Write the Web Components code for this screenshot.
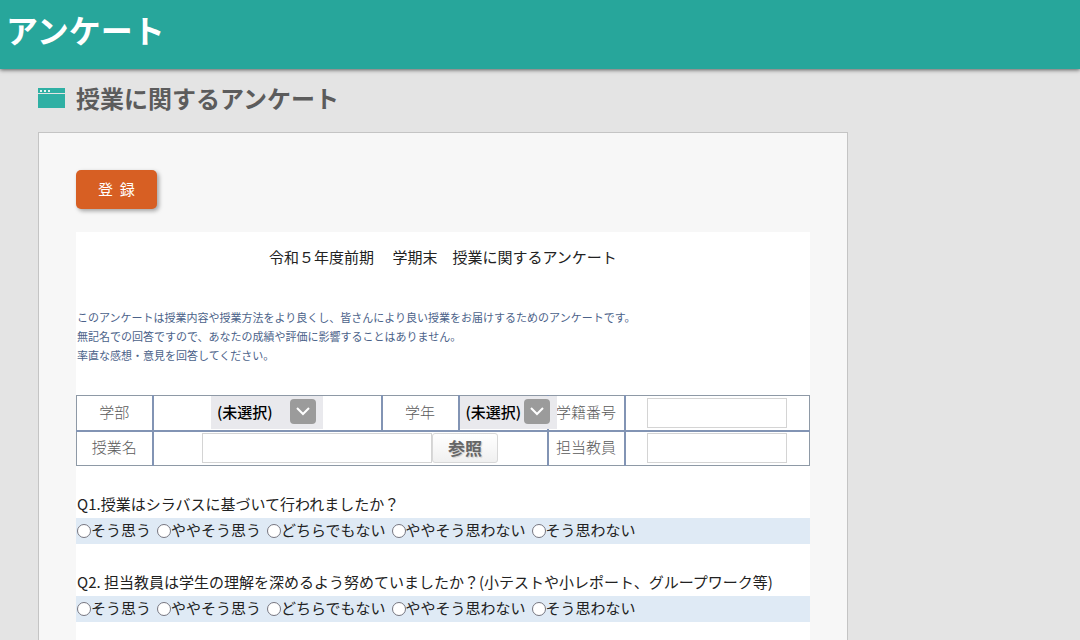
<!DOCTYPE html>
<html lang="ja">
<head>
<meta charset="utf-8">
<title>アンケート</title>
<style>
  html { height: 100%; }
  body {
    margin: 0; min-height: 100%; display: flex; flex-direction: column;
    background: #e4e4e4; color: #222;
    font: 15px/24px "Noto Sans CJK JP", sans-serif;
  }
  survey-page { flex: 1; }
</style>
</head>
<body>
<site-header>アンケート</site-header>
<survey-page>
  <page-title slot="title">授業に関するアンケート</page-title>
  <submit-button slot="actions">登  録</submit-button>
  <survey-intro>
    <span slot="heading">令和５年度前期　 学期末　授業に関するアンケート</span>
    このアンケートは授業内容や授業方法をより良くし、皆さんにより良い授業をお届けするためのアンケートです。<br>
    無記名での回答ですので、あなたの成績や評価に影響することはありません。<br>
    率直な感想・意見を回答してください。
  </survey-intro>
  <student-table></student-table>
  <survey-question name="q1">Q1.授業はシラバスに基づいて行われましたか？</survey-question>
  <survey-question name="q2">Q2. 担当教員は学生の理解を深めるよう努めていましたか？(小テストや小レポート、グループワーク等)</survey-question>
</survey-page>

<script>
  const define = (name, html, setup) => {
    const template = document.createElement('template');
    template.innerHTML = html;
    customElements.define(name, class extends HTMLElement {
      constructor() {
        super();
        this.attachShadow({ mode: 'open' }).append(template.content.cloneNode(true));
      }
      connectedCallback() { if (setup) setup(this, this.shadowRoot); }
    });
  };

  define('site-header', `
    <style>
      :host { display: block; position: relative; background: #27a69b; box-shadow: 0 1px 4px rgba(0,0,0,.6); }
      h1 { margin: 0; padding: 5px 6px 16px; font-size: 32px; line-height: 48px; font-weight: 700; color: #fff; }
    </style>
    <header><h1><slot></slot></h1></header>`);

  define('page-title', `
    <style>
      :host { display: flex; align-items: center; gap: 10px; color: #5c5c5c; }
      svg { flex: none; }
      h2 { margin: 0; font-size: 24px; line-height: 36px; font-weight: 700; }
    </style>
    <svg width="28" height="20" viewBox="0 0 28 20" aria-hidden="true">
      <path fill="#2fb0a4" d="M0 0h27v5H0zM0 6h27v14H0z"/>
      <path fill="#e4f4f2" d="M2 2h2v2H2zM6 2h2v2H6zM10 2h2v2h-2z"/>
    </svg>
    <h2><slot></slot></h2>`);

  define('submit-button', `
    <style>
      :host { display: block; }
      button {
        display: block; height: 39px; padding: 0 22px 2px; border: 0; border-radius: 5px;
        background: #d75f23; color: #fff; font: inherit; white-space: pre;
        box-shadow: 2px 2px 4px rgba(0,0,0,.35);
      }
    </style>
    <button type="button"><slot></slot></button>`);

  define('survey-page', `
    <style>
      :host { display: flex; flex-direction: column; padding: 11px 38px 0; }
      .card {
        flex: 1; display: flex; flex-direction: column; box-sizing: border-box;
        width: 75vw; margin-top: 16px; padding: 37px 37px 0;
        background: #f7f7f7; border: 1px solid #c4c4c4; border-bottom: 0;
      }
      .sheet { flex: 1; margin-top: 23px; background: #fff; }
    </style>
    <slot name="title"></slot>
    <main class="card">
      <slot name="actions"></slot>
      <div class="sheet"><slot></slot></div>
    </main>`);

  define('survey-intro', `
    <style>
      :host { display: block; padding-top: 13px; }
      h3 { margin: 0; font: inherit; text-align: center; white-space: pre-wrap; }
      p { margin: 39px 0 30px; padding-left: 1px; font-size: 11px; line-height: 19px; color: #4b6289; }
    </style>
    <h3><slot name="heading"></slot></h3>
    <p><slot></slot></p>`);

  define('student-table', `
    <style>
      :host { display: block; }
      table { width: 100%; table-layout: fixed; border-collapse: collapse; border: 1px solid #8e99a6; color: #5a5a5a; }
      th, td { height: 33px; padding: 0; border: 2px solid #8294b4; text-align: center; font-weight: 300; line-height: 24px; }
      th { box-sizing: border-box; padding-bottom: 2px; height: 35px; }
      tr:first-child > * { border-top: 1px solid #8e99a6; }
      tr:last-child > * { border-bottom: 1px solid #8e99a6; }
      tr > :first-child { border-left: 1px solid #8e99a6; }
      tr > :last-child { border-right: 1px solid #8e99a6; }
      .first { width: 76px; } .label { width: 77px; } .wide { width: 229px; } .narrow { width: 89px; }
      select {
        appearance: none; position: relative; display: block; box-sizing: border-box;
        height: 33px; margin: 0 auto; padding: 0 0 2px 6px; border: 0; border-radius: 0;
        color: #000; font: inherit; font-weight: 500;
        background: #e9e9ed url("data:image/svg+xml,%3Csvg xmlns='http://www.w3.org/2000/svg' width='26' height='25'%3E%3Crect width='26' height='25' rx='4' fill='%239b9b9b'/%3E%3Cpath d='M7 9l6 6 6-6' fill='none' stroke='%23fff' stroke-width='2'/%3E%3C/svg%3E") no-repeat right 7px top 3px;
      }
      #dept { width: 112px; } #grade { width: 97px; margin: 0; }
      input { box-sizing: border-box; height: 30px; padding: 0 4px; border: 1px solid #d4d4d4; background: #fff; font: inherit; }
      .short { display: block; width: 140px; margin: 0 auto; }
      .course { display: flex; justify-content: center; }
      .course input { width: 230px; }
      button {
        height: 30px; padding: 0 15px; border: 1px solid #d8d8d8; border-radius: 3px;
        background: linear-gradient(#fff, #f0f0f0); color: #666; font: inherit; font-size: 17px; font-weight: 700;
        text-shadow: 1px 1px 1px #ccc;
      }
    </style>
    <table>
      <colgroup><col class="first"><col class="wide"><col class="label"><col class="narrow"><col class="label"><col></colgroup>
      <tr>
        <th><label for="dept">学部</label></th>
        <td><select id="dept"><option>(未選択)</option></select></td>
        <th><label for="grade">学年</label></th>
        <td><select id="grade"><option>(未選択)</option></select></td>
        <th><label for="number">学籍番号</label></th>
        <td><input class="short" id="number" type="text"></td>
      </tr>
      <tr>
        <th><label for="course">授業名</label></th>
        <td colspan="3"><div class="course"><input id="course" type="text"><button type="button">参照</button></div></td>
        <th><label for="teacher">担当教員</label></th>
        <td><input class="short" id="teacher" type="text"></td>
      </tr>
    </table>`);

  const answers = ['そう思う', 'ややそう思う', 'どちらでもない', 'ややそう思わない', 'そう思わない'];
  define('survey-question', `
    <style>
      :host { display: block; margin-top: 26px; }
      fieldset { margin: 0; padding: 0; border: 0; min-width: 0; }
      legend { padding: 0 0 2px 1px; }
      .answers { display: flex; flex-wrap: wrap; gap: 0 6px; padding: 0 0 2px 1px; background: #dfeaf5; }
      label { display: flex; align-items: center; }
      input {
        appearance: none; box-sizing: border-box; width: 14px; height: 14px; margin: 2px 0 0;
        border: 1px solid #767680; border-radius: 50%; background: #fff;
      }
      input:checked { border-width: 4px; border-color: #2a70d0; }
    </style>
    <fieldset>
      <legend><slot></slot></legend>
      <div class="answers"></div>
    </fieldset>`, (host, root) => {
      const box = root.querySelector('.answers');
      if (box.children.length) return;
      answers.forEach((text, i) => {
        const label = document.createElement('label');
        const input = document.createElement('input');
        input.type = 'radio';
        input.name = host.getAttribute('name');
        input.value = i + 1;
        label.append(input, text);
        box.append(label);
      });
    });
</script>
</body>
</html>
